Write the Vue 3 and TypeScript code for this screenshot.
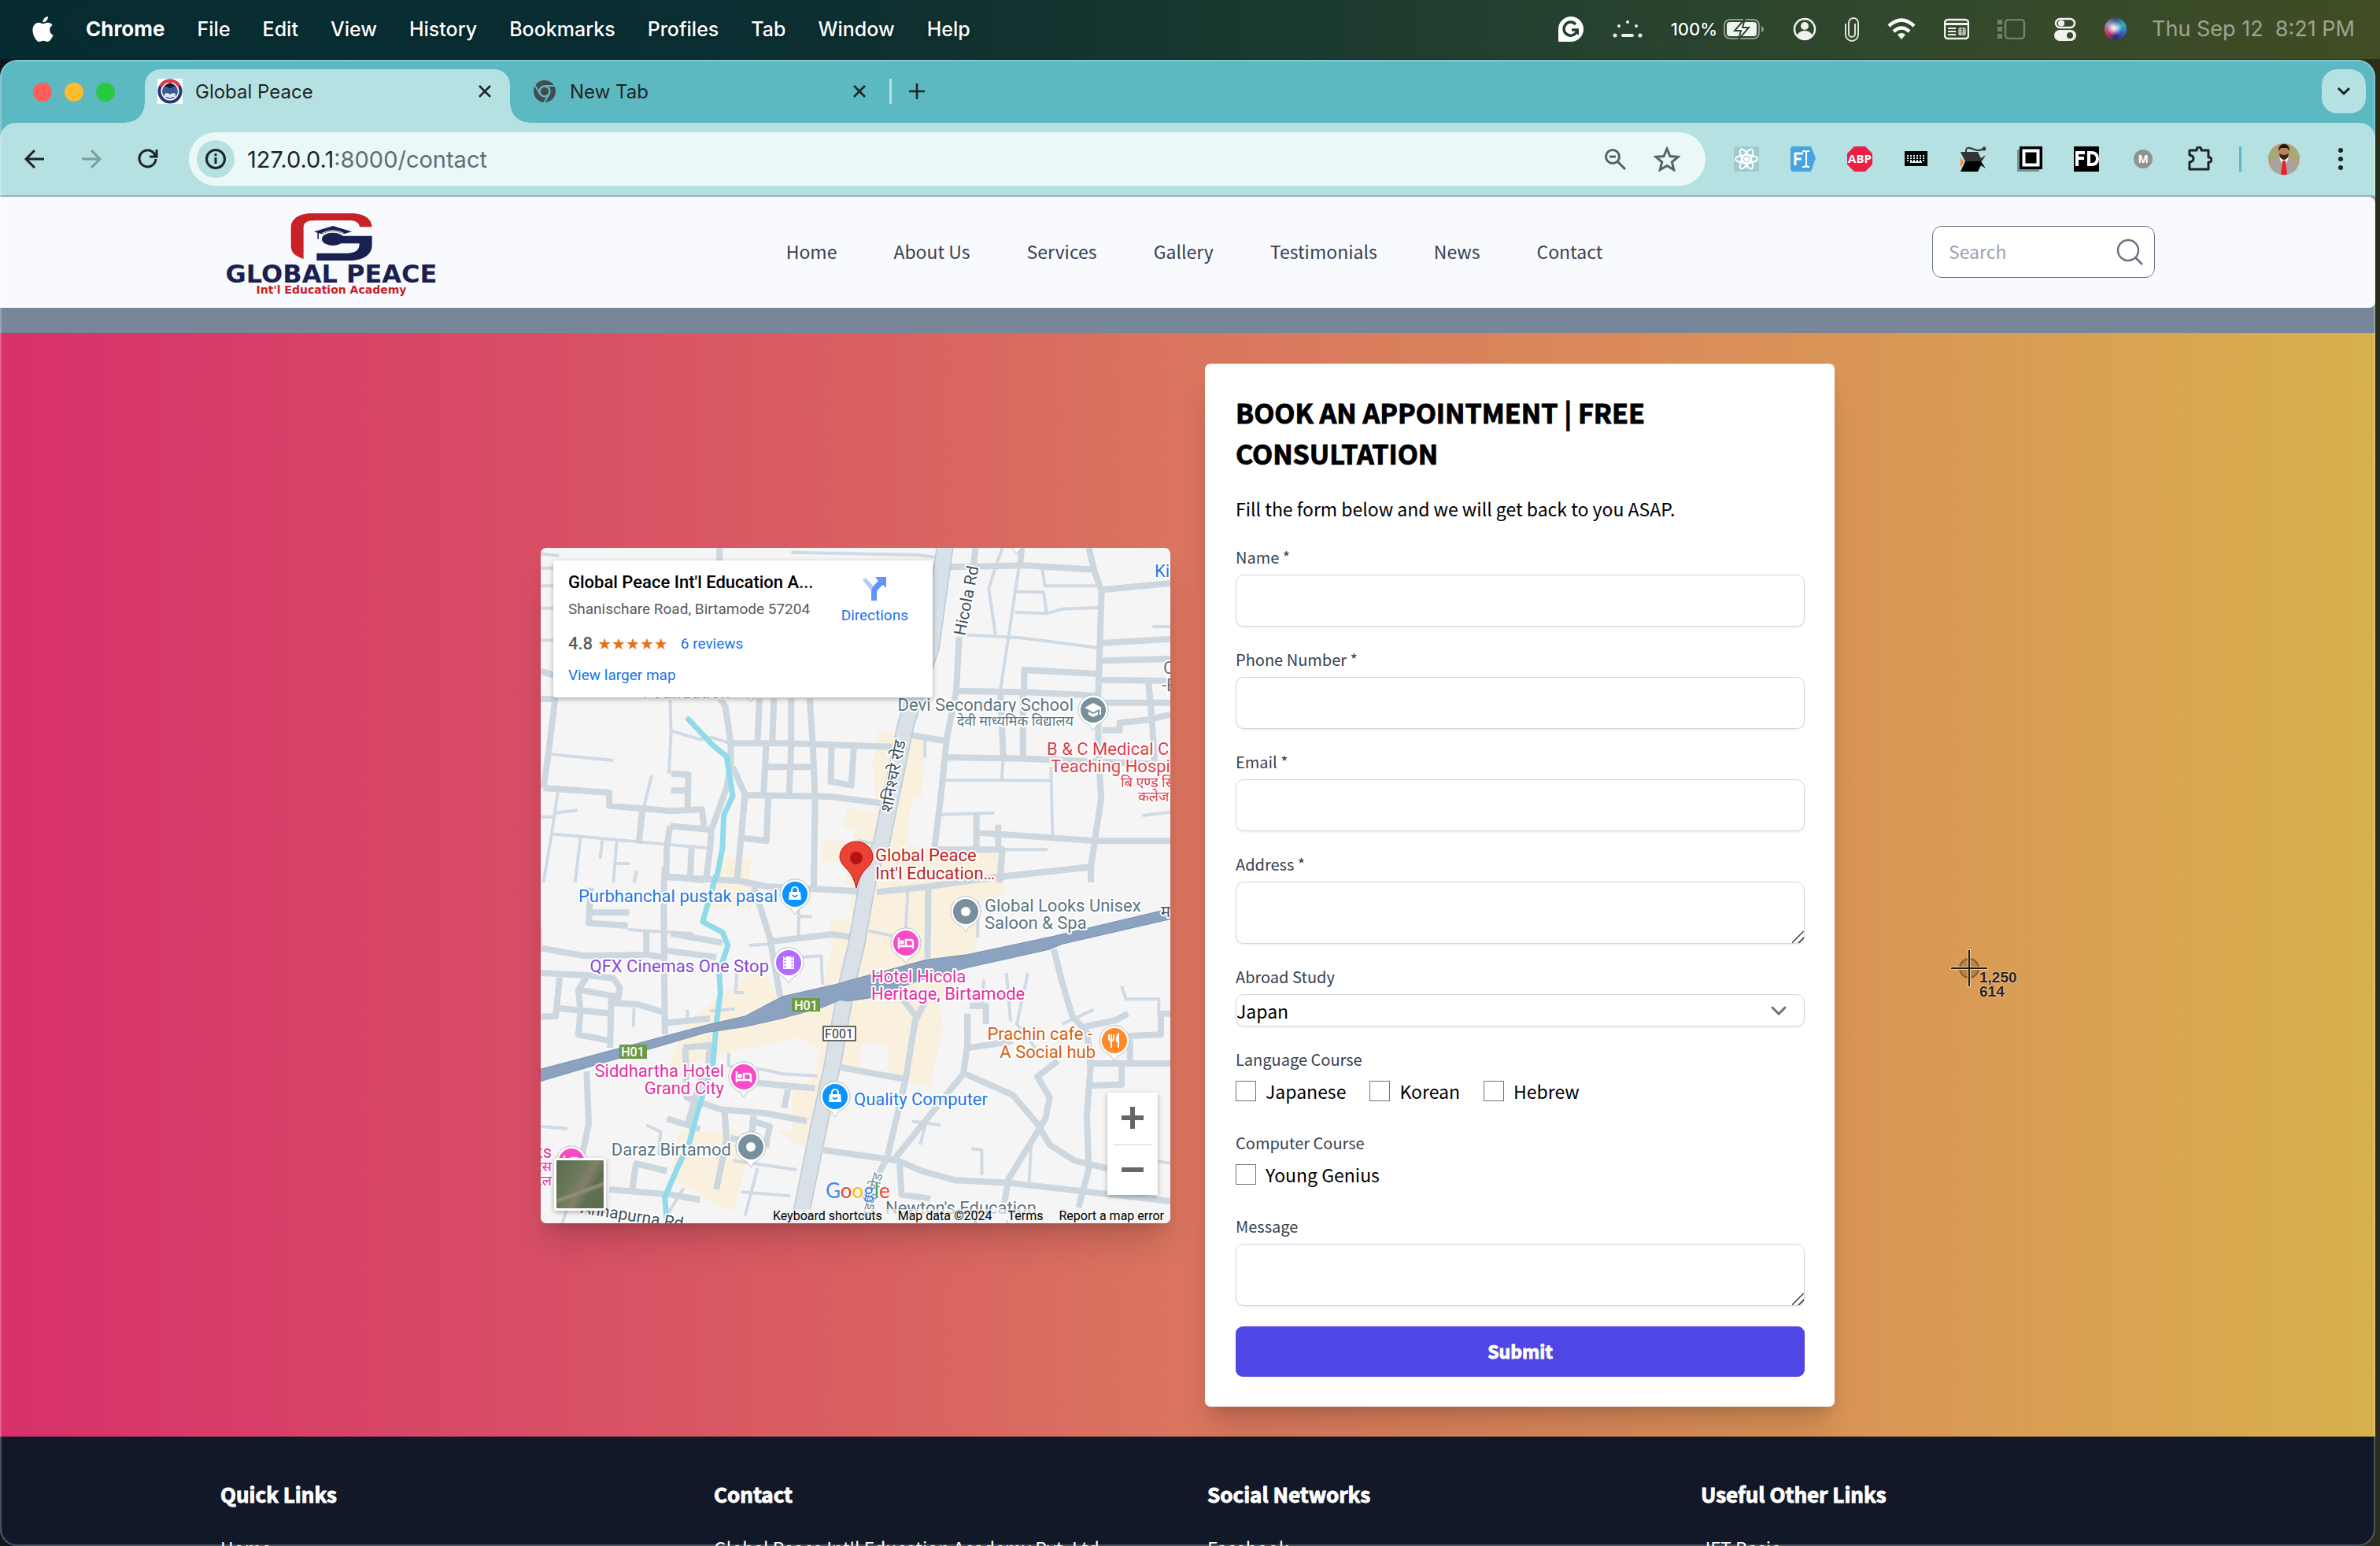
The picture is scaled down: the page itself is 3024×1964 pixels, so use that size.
<script setup lang="ts">
import { ref } from 'vue'

interface Label {
  x: number
  y: number
  text: string
  color: string
  end?: boolean
  size?: number
}
interface Pin {
  x: number
  y: number
  color: string
  kind: 'dot' | 'bag' | 'film' | 'bed' | 'fork' | 'school'
}

const menus = ['File', 'Edit', 'View', 'History', 'Bookmarks', 'Profiles', 'Tab', 'Window', 'Help']
const nav = ['Home', 'About Us', 'Services', 'Gallery', 'Testimonials', 'News', 'Contact']
const textFields = [
  { id: 'name', label: 'Name *', type: 'text' },
  { id: 'phone', label: 'Phone Number *', type: 'tel' },
  { id: 'email', label: 'Email *', type: 'email' },
]
const languages = ['Japanese', 'Korean', 'Hebrew']
const country = ref('Japan')
const footer = [
  { title: 'Quick Links', first: 'Home' },
  { title: 'Contact', first: "Global Peace Int'l Education Academy Pvt. Ltd" },
  { title: 'Social Networks', first: 'Facebook' },
  { title: 'Useful Other Links', first: 'JFT Basic' },
]

const slate = '#5b7683'
const blue = '#1f77e6'
const pink = '#e5309f'
const rose = '#dd3e4b'

const labels: Label[] = [
  { x: 301, y: 450, text: 'Purbhanchal pustak pasal', color: blue, end: true },
  { x: 290, y: 539, text: 'QFX Cinemas One Stop', color: '#8547d6', end: true },
  { x: 677, y: 207, text: 'Devi Secondary School', color: slate, end: true },
  { x: 677, y: 226, text: 'देवी माध्यमिक विद्यालय', color: slate, end: true, size: 18 },
  { x: 643, y: 263, text: 'B & C Medical C', color: rose },
  { x: 648, y: 285, text: 'Teaching Hospi', color: rose },
  { x: 737, y: 304, text: 'बि एण्ड सि', color: rose, size: 18 },
  { x: 759, y: 322, text: 'कलेज', color: rose, size: 18 },
  { x: 425, y: 398, text: 'Global Peace', color: '#bd231d' },
  { x: 425, y: 421, text: "Int'l Education…", color: '#bd231d' },
  { x: 564, y: 462, text: 'Global Looks Unisex', color: slate },
  { x: 564, y: 484, text: 'Saloon & Spa', color: slate },
  { x: 420, y: 552, text: 'Hotel Hicola', color: pink },
  { x: 420, y: 574, text: 'Heritage, Birtamode', color: pink },
  { x: 701, y: 625, text: 'Prachin cafe -', color: '#d65f10', end: true },
  { x: 705, y: 648, text: 'A Social hub', color: '#d65f10', end: true },
  { x: 233, y: 672, text: 'Siddhartha Hotel', color: pink, end: true },
  { x: 233, y: 694, text: 'Grand City', color: pink, end: true },
  { x: 398, y: 708, text: 'Quality Computer', color: blue },
  { x: 242, y: 772, text: 'Daraz Birtamod', color: slate, end: true },
  { x: 780, y: 37, text: 'Kin', color: blue },
  { x: 791, y: 160, text: 'C', color: slate },
  { x: 789, y: 182, text: '-E', color: slate },
  { x: 438, y: 846, text: "Newton's Education", color: slate },
  { x: 545, y: 870, text: 'Academy', color: slate },
  { x: 130, y: 191, text: 'Foundation', color: slate },
  { x: 14, y: 775, text: 'ts', color: pink, end: true },
  { x: 14, y: 792, text: 'रेस', color: pink, end: true, size: 18 },
  { x: 14, y: 810, text: 'टेल', color: pink, end: true, size: 18 },
  { x: 788, y: 469, text: 'मा', color: '#40535f', size: 20 },
]
const pins: Pin[] = [
  { x: 605, y: -18, color: '#78909c', kind: 'dot' },
  { x: 267, y: 170, color: '#78909c', kind: 'dot' },
  { x: 702, y: 206, color: '#78909c', kind: 'school' },
  { x: 323, y: 440, color: '#0b93ff', kind: 'bag' },
  { x: 315, y: 527, color: '#b06bff', kind: 'film' },
  { x: 464, y: 502, color: '#f94bc9', kind: 'bed' },
  { x: 540, y: 462, color: '#78909c', kind: 'dot' },
  { x: 258, y: 672, color: '#f94bc9', kind: 'bed' },
  { x: 374, y: 697, color: '#0b93ff', kind: 'bag' },
  { x: 729, y: 626, color: '#ff8a29', kind: 'fork' },
  { x: 267, y: 761, color: '#78909c', kind: 'dot' },
  { x: 39, y: 779, color: '#f94bc9', kind: 'bed' },
]

const northRoads =
  'M448 45V95M13 620L48 622L33 820L20 960M13 515L45 530M450 620L462 650L475 790V870L465 960L428 1120L425 1190L415 1310M475 790L620 790L880 804M545 620L540 785M580 620L576 785M622 620V785M667 620L674 785L680 1000L677 1320M561 795L555 985M622 795L617 985M565 880H672M480 880L510 985L490 1320M510 987L720 993L838 1018M720 800L718 935L768 950L774 805M20 960L180 978V1028L330 1048L405 1042L410 1105M330 905L372 910L370 1040M330 970H368M328 1105L430 1120M328 1105L320 1180L318 1310M260 1045L252 1172M566 990L562 1162L500 1150M380 1190L376 1305M316 1295L410 1312M1070 45L1065 110M1182 45L1178 108M1345 45L1358 130L1376 210L1368 600V820L1375 1000L1350 1260V1320M1005 118L1190 112L1358 128M1376 205L1543 180M1376 408L1543 392M1376 475L1543 468M1376 548L1543 552M1030 385L1023 590L1000 770L985 1000L970 1185M1023 590L1190 595L1368 608M1188 590V510L1368 525M1130 590L1137 840M1185 600V840M915 760L995 780M995 843L1190 848L1368 860L1543 870M1375 635H1543M1490 560L1498 690L1505 860M1378 740H1420V712L1490 700L1543 680M1070 1130L1210 1145L1360 1162H1543M1072 1055V1190M970 1195L1135 1195L1128 1320M1125 1100V1190M1350 1262L1120 1300'
const northLanes =
  'M622 62L930 72L975 82M1135 45L1118 120L1102 200L1118 375M1175 120L1130 590M1040 376L1180 388L1365 425M1232 125L1238 190H1376M1170 212L1235 214L1243 295L1165 290M1243 295L1280 278L1376 272M1500 345H1543M328 625L330 750L325 905M330 742L400 775L430 768L475 790M40 832L190 855M283 912L262 1045M13 68L58 75M13 122H45M13 190H45M13 275H45M13 397H45M38 1135L425 1190M55 975L40 1135L20 1320M50 1055L102 1045M110 1150L97 1320M163 1160L158 1230M198 1165L190 1320M190 1248H230M247 1275L240 1320M990 930L1253 932M1253 880L1257 1140M1137 850L1133 930M980 1062L1115 1055M1135 1195H1245M1475 1065L1543 1052M947 780V845M13 1070H45M785 1160L820 1172'
const southRoads =
  'M315 0L312 100L315 640M320 40L500 55L560 75L800 95M830 97L960 75L1120 40M1128 40L1350 0M677 0V85M530 70L570 270L595 495M135 80L130 215L225 225M135 175H228M13 310L120 340L270 335L315 345M270 240V340M320 320L440 345M330 255L420 280L455 290M13 405L130 415L190 425L205 460L200 520M60 410L50 570L13 572M125 420L105 470L110 550L105 640L185 665M110 470L195 495M60 540L185 560M190 520L250 525L312 555M185 480L182 690M322 595L425 578M575 285L720 258L775 270M955 85L953 350M890 500L925 570L900 810L855 1110L800 1270M945 520L920 600M360 690L425 680L420 750M365 690L368 880L450 925L560 940L660 970M510 820L680 845M615 840L605 920M743 765L905 812M700 1080L880 1120L940 1160L1020 1195L1150 1205L1543 1275M1050 560V680L1040 790L870 1120M1045 790L1160 870L1220 980L1250 1060L1310 1120L1390 1150M1055 530H1095V600M1260 315L1280 440L1305 570L1340 630L1350 750L1340 950L1345 1150L1320 1300M1335 610L1410 585L1440 560M1340 750H1543M1270 740L1220 800L1250 880L1240 960L1150 1190L1140 1280M1340 835L1425 830V750M1543 560H1520V640L1445 645V740M885 1120L890 1250L960 1265M240 1130L320 1160M180 1230L330 1250L400 1270M320 960L400 1000M405 800L385 900L370 985M460 930L465 1040L440 1230M125 780L130 980L110 1130M530 950L525 1060M530 970L570 990L560 1060M475 1035L570 1060M245 1130L235 1240M1055 690L1160 665'
const southLanes =
  'M13 230V300M225 240L380 255L385 280M520 300L570 295M640 160V265M640 190H672M240 540L238 610M370 545V595M425 550L485 542M490 400L487 480H507M640 345L695 340L698 450M905 95L900 250M1075 130V270M810 245L870 265M1090 430L1085 530M1145 405L1155 590M1197 405L1170 600L1215 690M13 990L78 998M470 710V760L560 775L600 790L685 797M915 970L985 985M955 945L935 1060M480 1120L635 1155M1060 1075L1085 1080V1175M1205 1055L1200 1200M500 1240L620 1255M510 1330L540 1150M1425 455L1435 505H1515V560M1280 600L1357 545M270 985L305 1010L300 1100M1475 1115L1543 1130M1010 1280V1330M90 1250L65 1360M360 1225L320 1330'
</script>

<template>
  <div class="desktop">
    <header class="menubar">
      <div class="menus">
        <svg class="apple" viewBox="2 0 20 24"><path fill="#fff" d="M12.152 6.896c-.948 0-2.415-1.078-3.96-1.04-2.04.027-3.91 1.183-4.961 3.014-2.117 3.675-.546 9.103 1.519 12.09 1.013 1.454 2.208 3.09 3.792 3.039 1.52-.065 2.09-.987 3.935-.987 1.831 0 2.35.987 3.96.948 1.637-.026 2.676-1.48 3.676-2.948 1.156-1.688 1.636-3.325 1.662-3.415-.039-.013-3.182-1.221-3.22-4.857-.026-3.04 2.48-4.494 2.597-4.559-1.429-2.09-3.623-2.324-4.39-2.376-2-.156-3.675 1.09-4.61 1.09zM15.53 3.83c.843-1.012 1.4-2.427 1.245-3.83-1.207.052-2.662.805-3.532 1.818-.78.896-1.454 2.338-1.273 3.714 1.338.104 2.715-.688 3.559-1.701" /></svg>
        <b>Chrome</b>
        <span v-for="m in menus" :key="m">{{ m }}</span>
      </div>
      <div class="status">
        <svg width="34" height="34" viewBox="0 0 34 34"><path fill="#fff" d="M1 33V17a16 16 0 1 1 16 16z" /><path d="M23 11a8.500 8.500 0 1 0 2 7h-7" fill="none" stroke="#243f2e" stroke-width="3.500" /><path d="M20 18h6v6" fill="none" stroke="#243f2e" stroke-width="2" /></svg>
        <svg width="38" height="24" viewBox="0 0 38 24" fill="#eee"><circle cx="19" cy="3" r="2" /><circle cx="8" cy="8" r="2" /><circle cx="30" cy="8" r="2" /><circle cx="3" cy="20" r="2.500" /><rect x="11" y="18" width="16" height="4" rx="2" /><circle cx="35" cy="20" r="2.500" /></svg>
        <span class="battery">100%
          <svg width="52" height="26" viewBox="0 0 52 26"><rect x="1" y="1" width="44" height="24" rx="7" fill="none" stroke="#8d998c" stroke-width="2" /><rect x="4" y="4" width="38" height="18" rx="4" fill="#f1f3f0" /><path d="M48 9v8q3-1 3-4t-3-4" fill="#8d998c" /><path d="M27 0L14 15h8l-3 11 13-15h-8z" fill="#fff" stroke="#2c452e" stroke-width="2" /></svg>
        </span>
        <svg width="30" height="30" viewBox="0 0 30 30"><circle cx="15" cy="15" r="13" fill="none" stroke="#f1f3f0" stroke-width="2.500" /><circle cx="15" cy="11" r="5" fill="#f1f3f0" /><path d="M5 23q3-6 10-6t10 6q-4 5-10 5T5 23" fill="#f1f3f0" /></svg>
        <svg width="18" height="34" viewBox="0 0 18 34"><path d="M1 10v14a8 8 0 0 0 16 0V9a6 6 0 0 0-12 0v14a4 4 0 0 0 8 0V10" fill="none" stroke="#dfe3dc" stroke-width="2" /></svg>
        <svg width="36" height="28" viewBox="0 0 36 28" fill="none" stroke="#fff" stroke-width="4.500"><path d="M2 10Q18-5 34 10" /><path d="M8 17q10-9 20 0" /><path d="M18 27l-5-6q5-4 10 0z" fill="#fff" stroke="none" /></svg>
        <svg width="32" height="28" viewBox="0 0 32 28"><rect x="1" y="2" width="30" height="24" rx="4" fill="none" stroke="#f1f3f0" stroke-width="2.500" /><path d="M2 6h28v3H2z" fill="#f1f3f0" /><path d="M5 13h10M5 17h10M5 21h10" stroke="#f1f3f0" stroke-width="2" /><path d="M19 13h8v8h-8zM19 16h8M19 19h8M21 12v10M25 12v10" stroke="#f1f3f0" fill="none" /></svg>
        <svg width="36" height="26" viewBox="0 0 36 26" opacity=".3"><rect x="10" y="1" width="24" height="24" rx="4" fill="none" stroke="#fff" stroke-width="2.500" /><path d="M0 1h6v6H0zM0 10h6v6H0zM0 19h6v6H0z" fill="#fff" /></svg>
        <svg width="28" height="30" viewBox="0 0 28 30"><rect x="2" y="2" width="24" height="11" rx="5.500" fill="none" stroke="#f1f3f0" stroke-width="2.500" /><circle cx="9" cy="7.500" r="4" fill="#f1f3f0" /><rect x="0" y="16" width="28" height="14" rx="7" fill="#f1f3f0" /><circle cx="20" cy="23" r="4" fill="#35492c" /></svg>
        <i class="siri"></i>
        <time>Thu Sep 12&nbsp; 8:21 PM</time>
      </div>
    </header>

    <div class="window">
      <div class="tabstrip">
        <div class="lights"><i></i><i></i><i></i></div>
        <div class="tab active">
          <svg width="32" height="32" viewBox="0 0 32 32"><path fill="#fff" d="M0 0h32v32H0z" /><circle cx="16" cy="16" r="13.500" fill="none" stroke="#27366b" stroke-width="4" /><path d="M4 10a13.500 13.500 0 0 1 24 0" fill="none" stroke="#e43b45" stroke-width="4" /><circle cx="16" cy="16" r="10" fill="#3d5a94" /><path d="M9 9l7-4 7 4-7 3z" fill="#101935" /><path d="M9 19q4-2 7 1 3-3 7-1v5q-4-2-7 1-3-3-7-1z" fill="#dfe5ef" /></svg>
          <span>Global Peace</span>
          <button aria-label="Close tab"><svg width="16" height="16" viewBox="0 0 16 16"><path d="M1 1l14 14M15 1L1 15" stroke="#1d2426" stroke-width="2.500" /></svg></button>
        </div>
        <div class="tab">
          <svg width="32" height="32" viewBox="0 0 32 32"><circle cx="16" cy="16" r="14" fill="#434b4e" /><path d="M16 9h13M10 19.500L3.500 8M22 19.500L15.500 30" stroke="#5cb8c1" stroke-width="2" /><circle cx="16" cy="16" r="6.500" fill="#434b4e" stroke="#5cb8c1" stroke-width="2.500" /></svg>
          <span>New Tab</span>
          <button aria-label="Close tab"><svg width="16" height="16" viewBox="0 0 16 16"><path d="M1 1l14 14M15 1L1 15" stroke="#1d2426" stroke-width="2.500" /></svg></button>
        </div>
        <i class="tab-rule"></i>
        <button class="new-tab" aria-label="New tab"><svg width="20" height="20" viewBox="0 0 20 20"><path d="M10 0v20M0 10h20" stroke="#1d2426" stroke-width="2.500" /></svg></button>
        <button class="tab-search" aria-label="Search tabs"><svg width="18" height="12" viewBox="0 0 18 12"><path d="M2 2l7 7 7-7" fill="none" stroke="#1d2426" stroke-width="3" /></svg></button>
      </div>

      <div class="toolbar">
        <div class="history">
          <button aria-label="Back"><svg width="28" height="28" viewBox="0 0 28 28"><path d="M26 14H4M14 3L3 14l11 11" fill="none" stroke="#1d2426" stroke-width="3" /></svg></button>
          <button aria-label="Forward"><svg width="28" height="28" viewBox="0 0 28 28"><path d="M2 14h22M14 3l11 11-11 11" fill="none" stroke="#7f9b9d" stroke-width="3" /></svg></button>
          <button aria-label="Reload"><svg width="28" height="28" viewBox="0 0 28 28"><path d="M24 14a10.500 10.500 0 1 1-3-8l3 4M25 2v9h-9" fill="none" stroke="#1d2426" stroke-width="3" /></svg></button>
        </div>
        <div class="omnibox">
          <span class="info"><svg width="28" height="28" viewBox="0 0 28 28"><circle cx="14" cy="14" r="11.500" fill="none" stroke="#1d2426" stroke-width="3" /><path d="M14 12v8M14 7v3" stroke="#1d2426" stroke-width="3" /></svg></span>
          <span class="url">127.0.0.1<em>:8000/contact</em></span>
          <svg width="30" height="30" viewBox="0 0 30 30" fill="none" stroke="#5a6163" stroke-width="3"><circle cx="12" cy="12" r="8.500" /><path d="M18 18l10 10M8 12h8" /></svg>
          <svg class="star" width="34" height="32" viewBox="0 0 34 32"><path d="M17 3l4 9.500 10 .8-7.700 6.600 2.400 9.800L17 24.500l-8.700 5.200 2.400-9.800L3 13.300l10-.8z" fill="none" stroke="#5a6163" stroke-width="3" /></svg>
        </div>
        <div class="extensions">
          <svg viewBox="0 0 32 32"><rect width="32" height="32" rx="3" fill="#a1cacd" /><g fill="none" stroke="#fff" stroke-width="2"><ellipse cx="16" cy="16" rx="14" ry="5" /><ellipse cx="16" cy="16" rx="14" ry="5" transform="rotate(60 16 16)" /><ellipse cx="16" cy="16" rx="14" ry="5" transform="rotate(120 16 16)" /></g><circle cx="16" cy="16" r="3" fill="#fff" /></svg>
          <svg viewBox="0 0 32 32"><path d="M4 0h22l6 15-6 17H4q-4 0-4-4V4q0-4 4-4" fill="#46a4e2" /><path d="M6 24V9h10M6 16h8" fill="none" stroke="#fff" stroke-width="3" /><path d="M15 6h3l2 1 2-1h2M15 26h3l2-1 2 1h2M20 6v20" fill="none" stroke="#fff" stroke-width="2" /></svg>
          <svg viewBox="0 0 32 32"><path d="M9 0h14l9 9v14l-9 9H9l-9-9V9z" fill="#ed1e45" /><text x="16" y="21" text-anchor="middle" font-size="15" font-weight="700" fill="#fff" font-family="Open Sans, sans-serif">ABP</text></svg>
          <svg viewBox="0 0 32 32"><path d="M1 6h29v19H1z" fill="#000" /><path d="M4 12h24M4 15h24M4 18h24" stroke="#d8efef" stroke-width="2" stroke-dasharray="2 2" /><path d="M8 20h15" stroke="#d8efef" stroke-width="2" /></svg>
          <svg viewBox="0 0 32 32"><path d="M7 8V5q0-4 5-3l9 3q6 0 8-2" fill="none" stroke="#333" stroke-width="2" /><circle cx="30" cy="3" r="2.500" fill="#333" /><path d="M0 14v13l4-7z" fill="#ff8a10" /><path d="M0 7h22l4 8 6-4-5 8H6z" fill="#333" /><path d="M6 19h20l6 9-6-4-4 8H0z" fill="#000" /></svg>
          <svg viewBox="0 0 32 32"><path d="M0 4h28v28H0z" fill="#759294" /><path d="M3 0h29v29H3z" fill="#000" /><path d="M8.500 5.500h18v18h-18z" fill="#000" stroke="#fff" stroke-width="4" /></svg>
          <svg viewBox="0 0 32 32"><path d="M0 0h32v32H0z" fill="#000" /><path d="M4 25V8h10M4 15h9M19 8v15h3q8 0 8-7.500T22 8z" fill="none" stroke="#fff" stroke-width="4" /></svg>
          <svg viewBox="0 0 32 32"><circle cx="16" cy="16" r="12" fill="#919191" /><text x="16" y="21" text-anchor="middle" font-size="14" font-weight="700" fill="#fff" font-family="Open Sans, sans-serif">M</text></svg>
          <svg viewBox="0 0 32 32"><path d="M3 6h9v-1a3 3 0 0 1 6 0v1h9v9h1a3 3 0 0 1 0 6h-1v9H3v-9q5-1 5-4.500T3 12z" transform="translate(0 -1)" fill="none" stroke="#1d2426" stroke-width="3" stroke-linejoin="round" /></svg>
        </div>
        <i class="tool-rule"></i>
        <svg class="avatar" viewBox="0 0 40 40"><defs><clipPath id="face"><circle cx="20" cy="20" r="20" /></clipPath></defs><g clip-path="url(#face)"><path fill="#c09a70" d="M0 0h40v40H0z" /><path d="M0 8h12v12H0zM28 6h12v12H28z" fill="#a4aa76" /><path d="M3 40V24l12-6h10l12 6v16z" fill="#a9a29f" /><path d="M14 18l6 14 6-14z" fill="#fff" /><path d="M18 22h4l2 18h-8z" fill="#e5232b" /><ellipse cx="20" cy="12" rx="6" ry="8" fill="#b97f5e" /><path d="M13 10q0-9 7-9t7 9l-3-4h-8z" fill="#1e1613" /><path d="M14 13q6 4 12 0-1 8-6 8t-6-8" fill="#3b261c" /></g></svg>
        <button class="more" aria-label="Menu"><svg width="8" height="30" viewBox="0 0 8 30" fill="#1d2426"><circle cx="4" cy="4" r="3" /><circle cx="4" cy="15" r="3" /><circle cx="4" cy="26" r="3" /></svg></button>
      </div>

      <main class="page">
        <header class="site-header">
          <div class="wrap head-row">
            <a href="#" class="logo" aria-label="Global Peace">
              <svg viewBox="30 0 900 372">
                <path fill="#c82127" d="M347 213C313 201 299 188 299 162V93C299 58 335 39 378 39H527C575 39 607 58 608 91H561C558 73 545 66 518 66H392C360 66 347 76 347 92Z" />
                <path fill="#1a2150" d="M490 125H608V162C607 198 573 219 522 219H397V191H512C545 191 560 180 560 154H490Z" />
                <ellipse cx="459" cy="137" rx="42" ry="25" fill="#1a2150" />
                <path fill="#1a2150" d="M387 109L459 87L531 109L500 118Q459 96 418 118L405 115V137H400V113Z" />
                <path d="M418 115Q459 94 500 115M420 122Q459 100 498 122" fill="none" stroke="#f9fafd" stroke-width="3" />
                <text x="453" y="303" text-anchor="middle" font-family="DejaVu Sans, sans-serif" font-weight="700" font-size="96" fill="#1a2150">GLOBAL PEACE</text>
                <text x="453" y="345" text-anchor="middle" font-family="DejaVu Sans, sans-serif" font-weight="700" font-size="42" fill="#c82127">Int'l Education Academy</text>
              </svg>
            </a>
            <nav><a v-for="n in nav" :key="n" href="#">{{ n }}</a></nav>
            <div class="search">
              <input type="text" placeholder="Search" aria-label="Search" />
              <svg width="34" height="34" viewBox="0 0 34 34" fill="none" stroke="#6b7280" stroke-width="2.500"><circle cx="15" cy="15" r="13" /><path d="M24 24l9 9" /></svg>
            </div>
          </div>
        </header>
        <div class="band"></div>

        <section class="contact">
          <div class="cards">
            <div class="map">
              <svg class="canvas" viewBox="0 0 800 858">
                <g transform="translate(-7 -15) scale(.523 .3333)" fill="#f9f0de">
                  <path d="M835 740L945 780L940 990L915 1000L900 1180L970 1190L1145 1200L1140 1330H755V1240H697V1160H775V1115L750 1110L758 1035L830 1060L820 870Z" />
                  <path d="M440 1222L525 1228L520 1330H435Z" />
                </g>
                <g transform="translate(-7 405) scale(.523 .3333)" fill="#f9f0de">
                  <path d="M440 0H520L522 155L410 150Z" /><path d="M760 0H1140L1135 115L1080 130L1070 320L800 460L700 460L720 310L715 200L770 200Z" />
                  <path d="M545 385L595 500L760 450L1010 440L980 530L992 600L960 838L740 770L705 1090L640 1060L590 1010L625 1000V850L680 800L690 700L640 650L440 720L320 780L370 590L470 470Z" />
                  <path fill="#f5f5f5" d="M793 670L860 680L855 795L785 770Z" /><path d="M350 1005L535 1015L480 1318L330 1190Z" />
                </g>
                <g transform="translate(-7 -15) scale(.523 .3333)" fill="none" class="lines">
                  <path :d="northLanes" stroke="#cfdae5" stroke-width="4" /><path :d="northRoads" stroke="#ccd7df" stroke-width="8" />
                  <path d="M372 698L430 795L465 840L480 990L458 1065L455 1190L440 1310" stroke="#90dbeb" stroke-width="7" stroke-linecap="round" />
                </g>
                <g transform="translate(-7 405) scale(.523 .3333)" fill="none" class="lines">
                  <path :d="southLanes" stroke="#cfdae5" stroke-width="4" /><path :d="southRoads" stroke="#ccd7df" stroke-width="8" />
                  <path d="M440 30L407 210L455 250L468 300L447 400L450 480L440 600L432 750L395 930L375 1050L345 1150L315 1260L320 1360" stroke="#90dbeb" stroke-width="7" />
                </g>
                <g fill="none" stroke-linejoin="round">
                  <path d="M514 -4L496 126L464 224L433 375L418 410L401 505L389 555L371 655L354 732L328 860" stroke="#bccad6" stroke-width="22" />
                  <path d="M514 -4L496 126L464 224L433 375L418 410L401 505L389 555L371 655L354 732L328 860" stroke="#d8e0e8" stroke-width="19" />
                </g>
                <path transform="translate(-7 405) scale(.523 .3333)" class="lines" fill="#8ba3c1" stroke="#7891ae" stroke-width="1" d="M13 772L420 602L510 570L600 495L740 445L760 435L950 355L1050 335L1260 265L1543 160V200L1280 295L1250 315L1050 385L940 430L815 500L760 512L740 508L700 535L600 578L510 610L415 632L13 818Z" />
                <g font-family="Roboto, sans-serif" font-weight="500" text-anchor="middle">
                  <path fill="#6d9b45" d="M319 572h36v17h-36zM100 631h35v18h-35z" />
                  <text x="337" y="587" fill="#fff" font-size="16">H01</text><text x="117" y="646" fill="#fff" font-size="16">H01</text>
                  <path d="M359 608h41v18h-41z" fill="#fff" stroke="#666" stroke-width="2" /><text x="379" y="623" fill="#333" font-size="16" font-weight="400">F001</text>
                </g>
                <g class="labels">
                  <text transform="translate(541 67) rotate(-79)" text-anchor="middle" y="7" fill="#40535f" font-size="21">Hicola Rd</text>
                  <text transform="translate(449 290) rotate(-79)" text-anchor="middle" y="6" fill="#40535f" font-size="21">शनिश्चरे रोड</text>
                  <text transform="translate(421 824) rotate(-75)" text-anchor="middle" y="6" fill="#7a8a94" font-size="18">सडक रोड</text>
                  <text transform="translate(50 845) rotate(9)" fill="#40535f" font-size="21">Annapurna Rd</text>
                  <text v-for="(l, i) in labels" :key="i" :x="l.x" :y="l.y" :fill="l.color" :text-anchor="l.end ? 'end' : 'start'" :font-size="l.size ?? 22">{{ l.text }}</text>
                </g>
                <g v-for="(p, i) in pins" :key="i" :transform="`translate(${p.x} ${p.y})`">
                  <path d="M0 26Q-3 19-10 16A19 19 0 1 1 10 16Q3 19 0 26Z" fill="#fff" stroke="#b9c0c5" stroke-width="1" />
                  <circle r="16" :fill="p.color" />
                  <circle v-if="p.kind === 'dot'" r="6" fill="#fff" />
                  <g v-else-if="p.kind === 'bag'"><path d="M-7-3H7L8 7H-8Z" fill="#fff" /><path d="M-4-2V-5a4 4 0 0 1 8 0v3" fill="none" stroke="#fff" stroke-width="2" /><path d="M-3 1q3 4 6 0" fill="none" :stroke="p.color" stroke-width="2" /></g>
                  <g v-else-if="p.kind === 'film'"><path d="M-7-8H7V8H-7Z" fill="#fff" /><path d="M-4.500-8V8M4.500-8V8" :stroke="p.color" stroke-width="2" stroke-dasharray="2 2" /></g>
                  <g v-else-if="p.kind === 'bed'" fill="none" stroke="#fff" stroke-width="2.500"><path d="M-9-7V7M-9 4H9M9 7V-1q0-3-3-3H0V3" /><circle cx="-5" cy="-1" r="1.500" /></g>
                  <g v-else-if="p.kind === 'fork'" fill="none" stroke="#fff" stroke-width="2"><path d="M-7-8v5q0 3 3 3t3-3v-5M-4-8V9M5 9V-8Q2-5 3 1h2" /></g>
                  <g v-else fill="#fff"><path d="M0-9L11-3 0 3-11-3Z" /><path d="M-6 2L0 5 6 2V6L0 9-6 6Z" /><path d="M8-2h2v8H8z" /></g>
                </g>
                <path d="M401 432Q398 418 390 409Q380 400 380 393A21 20 0 1 1 422 393Q422 400 412 409Q404 418 401 432Z" fill="#ea4335" stroke="#b31412" /><circle cx="401" cy="394" r="8" fill="#b31412" />
              </svg>

              <div class="place">
                <div class="place-text">
                  <strong>Global Peace Int'l Education A...</strong>
                  <span>Shanischare Road, Birtamode 57204</span>
                  <p><b>4.8</b><i>★★★★★</i><a href="#">6 reviews</a></p>
                  <a href="#">View larger map</a>
                </div>
                <a href="#" class="directions">
                  <svg width="32" height="32" viewBox="0 0 32 32"><path d="M1 5l4-3 12 13-4 5z" fill="#b3cdfb" /><path d="M17 1h14v14l-4-4q-8 6-8 10v10h-7V20q0-6 9-14z" fill="#5f96f8" /></svg>
                  Directions
                </a>
              </div>

              <div class="zoom">
                <button aria-label="Zoom in"><svg width="28" height="28" viewBox="0 0 28 28"><path d="M14 0v28M0 14h28" stroke="#666" stroke-width="6" /></svg></button>
                <button aria-label="Zoom out"><svg width="28" height="28" viewBox="0 0 28 28"><path d="M0 14h28" stroke="#666" stroke-width="6" /></svg></button>
              </div>
              <button class="satellite" aria-label="Show satellite imagery"></button>
              <span class="google"><i>G</i><i>o</i><i>o</i><i>g</i><i>l</i><i>e</i></span>
              <div class="attribution"><button>Keyboard shortcuts</button><span>Map data ©2024</span><a href="#">Terms</a><a href="#">Report a map error</a></div>
            </div>

            <form class="booking" @submit.prevent>
              <h2>BOOK AN APPOINTMENT | FREE CONSULTATION</h2>
              <p class="lead">Fill the form below and we will get back to you ASAP.</p>
              <div v-for="f in textFields" :key="f.id" class="field">
                <label :for="f.id">{{ f.label }}</label>
                <input :id="f.id" :type="f.type" />
              </div>
              <div class="field"><label for="address">Address *</label><textarea id="address"></textarea></div>
              <div class="field">
                <label for="country">Abroad Study</label>
                <div class="select">
                  <select id="country" v-model="country"><option>Japan</option></select>
                  <svg width="20" height="12" viewBox="0 0 20 12"><path d="M2 2l8 8 8-8" fill="none" stroke="#6b7280" stroke-width="3" stroke-linecap="round" /></svg>
                </div>
              </div>
              <fieldset>
                <legend>Language Course</legend>
                <div class="checks"><label v-for="l in languages" :key="l"><input type="checkbox" />{{ l }}</label></div>
              </fieldset>
              <fieldset>
                <legend>Computer Course</legend>
                <div class="checks"><label><input type="checkbox" />Young Genius</label></div>
              </fieldset>
              <div class="field"><label for="message">Message</label><textarea id="message"></textarea></div>
              <button class="submit">Submit</button>
            </form>
          </div>
        </section>

        <footer class="site-footer">
          <div class="wrap columns">
            <div v-for="c in footer" :key="c.title"><h3>{{ c.title }}</h3><a href="#">{{ c.first }}</a></div>
          </div>
        </footer>
      </main>
    </div>

    <div class="crosshair">
      <svg width="50" height="50" viewBox="0 0 50 50"><circle cx="25" cy="25" r="12" fill="#00000026" stroke="#00000059" stroke-width="2" /><path d="M25 1v48M1 25h48" stroke="#f0cfa0" stroke-width="4" /><path d="M25 2v46M2 25h46" stroke="#221c14" stroke-width="2" /></svg>
      <span>1,250<br />614</span>
    </div>
  </div>
</template>

<style>
body {
  margin: 0;
}
</style>

<style scoped>
* {
  box-sizing: border-box;
}
button {
  display: flex;
  align-items: center;
  justify-content: center;
  border: 0;
  padding: 0;
  background: none;
  font: inherit;
  color: inherit;
}
a {
  color: inherit;
  text-decoration: none;
}
svg {
  display: block;
  flex: none;
}
.desktop {
  position: relative;
  display: flex;
  flex-direction: column;
  height: 100vh;
  overflow: hidden;
  background: linear-gradient(90deg, #10161b 0, #15211c 60%, #2b2e18 100%);
  font-family: Inter, "Liberation Sans", sans-serif;
}
.menubar {
  display: flex;
  align-items: center;
  justify-content: space-between;
  flex: none;
  height: 75px;
  padding: 0 32px 2px 41px;
  background: linear-gradient(90deg, #062c31 0, #0a2e32 30%, #12312f 42%, #21402f 63%, #32482c 80%, #404d24 100%);
  color: #fff;
  font-size: 25px;
  font-weight: 500;
  text-shadow: 0 2px 4px #00000066;
}
.menus {
  display: flex;
  align-items: center;
  gap: 41px;
}
.menus b {
  font-size: 26px;
}
.apple {
  width: 27px;
  height: 32px;
}
.status {
  display: flex;
  align-items: center;
  gap: 36px;
}
.battery {
  display: flex;
  align-items: center;
  gap: 8px;
  font-size: 22px;
}
.siri {
  width: 28px;
  height: 28px;
  border-radius: 50%;
  background: radial-gradient(circle at 45% 45%, #fff 0, #ffffff00 45%), conic-gradient(#3a4a8c, #2bb3c0, #3d5cc5, #2b2c66, #d32a6e, #a08ca8, #3a4a8c);
}
time {
  margin-left: -4px;
  color: #ffffff80;
  font-size: 27px;
  font-weight: 400;
  text-shadow: none;
}
.window {
  position: relative;
  display: flex;
  flex-direction: column;
  flex: 1;
  min-height: 0;
  margin: 1px 6px 0 0;
  border-radius: 22px;
  overflow: hidden;
  background: #5cb8c1;
}
.window::after {
  content: "";
  position: absolute;
  inset: 0;
  border: 2px solid #ffffff40;
  border-radius: 22px;
  pointer-events: none;
}
.tabstrip {
  display: flex;
  align-items: center;
  flex: none;
  height: 80px;
  padding: 12px 12px 0 42px;
  color: #1d2426;
  font-size: 24px;
}
.lights {
  display: flex;
  gap: 16px;
  margin: 0 38px 10px 0;
}
.lights i {
  width: 24px;
  height: 24px;
  border-radius: 50%;
  background: #ff5f57;
}
.lights i:nth-child(2) {
  background: #febc2e;
}
.lights i:nth-child(3) {
  background: #28c840;
}
.tab {
  position: relative;
  display: flex;
  align-items: center;
  gap: 16px;
  width: 464px;
  height: 68px;
  padding: 0 24px 12px 16px;
}
.tab + .tab {
  padding-right: 30px;
  padding-left: 28px;
  width: 482px;
}
.tab span {
  flex: 1;
}
.active {
  border-radius: 20px 20px 0 0;
  background: #b5e1e3;
}
.active::before,
.active::after {
  content: "";
  position: absolute;
  bottom: 0;
  left: -24px;
  width: 24px;
  height: 24px;
  background: radial-gradient(circle at 0 0, #5cb8c1 23px, #b5e1e3 24px);
}
.active::after {
  left: 100%;
  background: radial-gradient(circle at 100% 0, #5cb8c1 23px, #b5e1e3 24px);
}
.tab-rule {
  width: 3px;
  height: 32px;
  margin-bottom: 12px;
  background: #b5e1e3;
}
.new-tab {
  margin: 0 auto 12px 22px;
}
.tab-search {
  width: 56px;
  height: 56px;
  margin-bottom: 12px;
  border-radius: 20px;
  background: #b5e1e3;
}
.toolbar {
  display: flex;
  align-items: center;
  flex: none;
  height: 94px;
  padding: 0 40px 0 30px;
  border-bottom: 2px solid #98b3b8;
  border-radius: 20px 20px 0 0;
  background: #b5e1e3;
}
.history {
  display: flex;
  gap: 44px;
  margin-right: 38px;
}
.omnibox {
  display: flex;
  align-items: center;
  flex: 1;
  height: 68px;
  margin-right: 36px;
  padding: 0 32px 0 10px;
  border-radius: 34px;
  background: #eaf8f8;
}
.info {
  display: flex;
  align-items: center;
  justify-content: center;
  width: 48px;
  height: 48px;
  margin-right: 16px;
  border-radius: 50%;
  background: #b5e1e3;
}
.url {
  flex: 1;
  color: #1d2426;
  font-size: 29px;
}
.url em {
  color: #626c6e;
  font-style: normal;
}
.star {
  margin-left: 34px;
}
.extensions {
  display: flex;
  gap: 40px;
}
.extensions svg {
  width: 32px;
  height: 32px;
}
.tool-rule {
  width: 3px;
  height: 32px;
  margin: 0 34px;
  background: #5cb8c1;
}
.avatar {
  width: 40px;
  height: 40px;
  margin-right: 48px;
}
.page {
  flex: 1;
  min-height: 0;
  overflow: hidden;
  background: #778699;
  color: #000;
  font-family: "Noto Sans CJK JP", "Noto Sans", sans-serif;
  font-size: 23px;
  line-height: 40px;
}
.wrap {
  width: 82%;
  max-width: 2458px;
  margin: 0 auto;
}
.site-header {
  display: flex;
  height: 141px;
  padding-bottom: 2px;
  border-radius: 0 8px 8px 0;
  background: #f9fafd;
}
.head-row {
  display: flex;
  align-items: center;
  justify-content: space-between;
}
.logo svg {
  width: 300px;
  height: 124px;
}
nav {
  display: flex;
  gap: 72px;
  padding-bottom: 2px;
  color: #374151;
}
.search {
  display: flex;
  align-items: center;
  width: 283px;
  height: 66px;
  padding: 0 14px 0 20px;
  border: 1px solid #6b7280;
  border-radius: 12px;
  background: #fff;
}
.search input {
  flex: 1;
  min-width: 0;
  border: 0;
  padding: 0 0 2px;
  background: none;
  font: inherit;
}
.search input::placeholder {
  color: #9ca3af;
}
.band {
  height: 32px;
}
.contact {
  padding: 39px 40px 38px;
  background: linear-gradient(90deg, #d7306b 0, #d96161 37%, #da755f 50%, #da9656 79%, #d8b04d 100%);
}
.cards {
  display: grid;
  grid-template-columns: 1fr 1fr;
  align-items: center;
  gap: 44px;
  max-width: 1644px;
  margin: 0 auto;
}
.map,
.booking {
  border-radius: 7px;
  box-shadow: 0 32px 40px -8px #00000024, 0 12px 16px -8px #00000024;
}
.map {
  position: relative;
  aspect-ratio: 800 / 858;
  overflow: hidden;
  background: #f5f5f5;
  font-family: Roboto, sans-serif;
}
.canvas {
  width: 100%;
}
.lines path,
path.lines {
  vector-effect: non-scaling-stroke;
  stroke-linejoin: round;
}
.labels {
  font-family: Roboto, "Noto Sans", sans-serif;
  paint-order: stroke;
  stroke: #fff;
  stroke-width: 4px;
  stroke-linejoin: round;
}
.place {
  position: absolute;
  top: 16px;
  left: 16px;
  display: flex;
  justify-content: space-between;
  width: 482px;
  height: 174px;
  padding: 10px 31px 12px 19px;
  border-radius: 3px;
  background: #fff;
  box-shadow: 0 2px 6px #0000004d;
  color: #5b5b5b;
  font-size: 19px;
  line-height: 36px;
}
.place-text {
  display: flex;
  flex-direction: column;
}
.place strong {
  color: #000;
  font-size: 22px;
  font-weight: 500;
}
.place span {
  line-height: 32px;
}
.place p {
  display: flex;
  margin: 10px 0 4px;
}
.place b {
  font-size: 22px;
  font-weight: 500;
}
.place i {
  margin: 0 16px 0 6px;
  color: #e7711b;
  font-family: "DejaVu Sans", sans-serif;
  font-size: 20px;
  font-style: normal;
}
.place a {
  color: #1a73e8;
}
.directions {
  display: flex;
  flex-direction: column;
  align-items: center;
  padding-top: 10px;
}
.zoom {
  position: absolute;
  right: 16px;
  bottom: 36px;
  width: 64px;
  padding: 0 8px;
  background: #fff;
  box-shadow: 0 2px 6px #0000004d;
}
.zoom button {
  width: 48px;
  height: 65px;
}
.zoom button + button {
  border-top: 2px solid #e6e6e6;
}
.satellite {
  position: absolute;
  bottom: 16px;
  left: 17px;
  width: 66px;
  height: 67px;
  border: 3px solid #fff;
  border-radius: 4px;
  background: linear-gradient(160deg, #6f7f5f00 58%, #93907a 62%, #6f7f5f00 68%), linear-gradient(120deg, #5b6c50, #6d7a5b 40%, #847f6a 55%, #5f7050 70%, #5a6d4e);
  box-shadow: 0 2px 6px #0000004d;
}
.google {
  position: absolute;
  bottom: 22px;
  left: 362px;
  color: #4285f4;
  font-family: Lato, sans-serif;
  font-size: 26px;
  line-height: 40px;
  text-shadow: 0 0 2px #fff, 0 0 2px #fff;
}
.google i {
  font-style: normal;
}
.google i:nth-child(2),
.google i:nth-child(6) {
  color: #ea4335;
}
.google i:nth-child(3) {
  color: #fbbc05;
}
.google i:nth-child(5) {
  color: #34a853;
}
.attribution {
  position: absolute;
  right: 0;
  bottom: 0;
  display: flex;
  gap: 20px;
  padding: 0 8px;
  background: #f5f5f5b3;
  font-size: 16px;
  line-height: 18px;
}
.booking {
  padding: 36px 38px 38px 39px;
  background: #fff;
}
h2,
h3,
.submit {
  -webkit-text-stroke: 1px currentColor;
}
h2 {
  margin: 0 0 24px;
  font-size: 34px;
  font-weight: 700;
  line-height: 52px;
}
.lead {
  margin: 0 0 26px;
}
.field {
  display: flex;
  flex-direction: column;
  gap: 6px;
  margin-bottom: 26px;
}
.field label,
legend {
  padding: 0;
  color: #374151;
  font-size: 20px;
  line-height: 32px;
}
.field input,
.field textarea,
.select {
  width: 100%;
  height: 66px;
  margin: 0;
  border: 1px solid #d1d5db;
  border-radius: 10px;
  background: #fff;
  box-shadow: 0 2px 3px #0000000d;
}
.field textarea {
  height: 79px;
}
.field textarea::-webkit-resizer {
  background: linear-gradient(135deg, #0000 44%, #555 46% 52%, #0000 54% 72%, #555 74% 80%, #0000 82%);
}
.select {
  position: relative;
  height: 41px;
}
.select select {
  width: 100%;
  height: 100%;
  border: 0;
  padding: 0 0 2px;
  appearance: none;
  background: none;
  color: #000;
  font: inherit;
}
.select svg {
  position: absolute;
  top: 14px;
  right: 22px;
}
fieldset {
  margin: 0;
  border: 0;
  padding: 0 0 30px;
}
.checks {
  display: flex;
  gap: 30px;
  padding-top: 4px;
}
.checks label {
  display: flex;
  align-items: center;
  gap: 12px;
}
.checks input {
  appearance: none;
  width: 26px;
  height: 26px;
  margin: 0;
  border: 1px solid #6b7280;
  background: #fff;
}
.submit {
  width: 100%;
  height: 64px;
  padding-bottom: 2px;
  border-radius: 9px;
  background: #4f46e5;
  color: #fff;
  font-weight: 700;
}
.site-footer {
  padding-top: 50px;
  background: #111827;
  color: #fff;
}
.columns {
  display: grid;
  grid-template-columns: repeat(4, 1fr);
  gap: 50px;
  height: 200px;
}
h3 {
  margin: 0 0 26px;
  font-size: 26px;
  font-weight: 700;
  line-height: 45px;
}
.crosshair {
  position: absolute;
  top: 1205px;
  left: 2477px;
  display: flex;
  color: #2b2318;
  font-family: "Liberation Sans", sans-serif;
  font-size: 19px;
  line-height: 18px;
  text-shadow: 0 0 2px #fff;
}
.crosshair span {
  margin: 28px 0 0 -12px;
  font-weight: 700;
}
</style>
